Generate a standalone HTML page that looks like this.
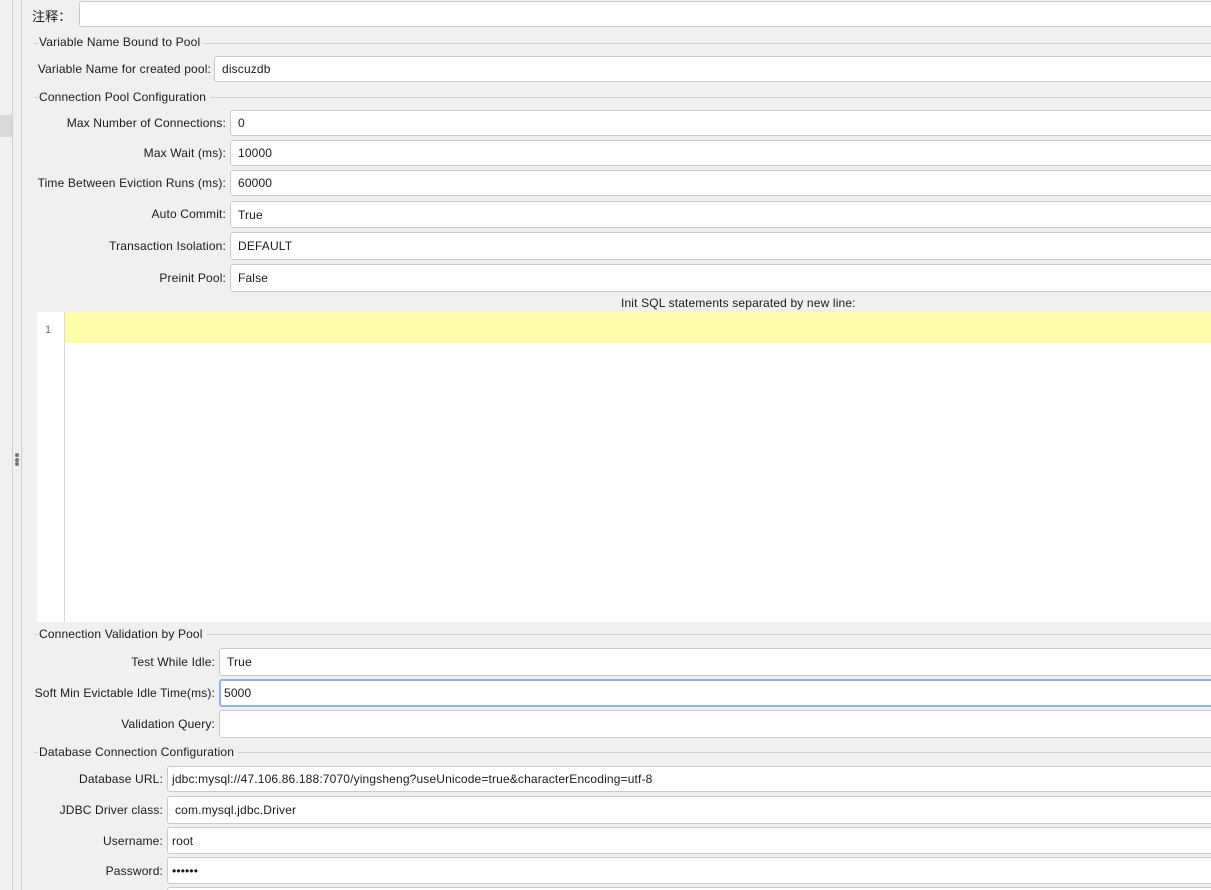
<!DOCTYPE html>
<html style="width:1211px;height:890px;overflow:hidden"><head><meta charset="utf-8"><style>
*{margin:0;padding:0;box-sizing:border-box}
html,body{width:1211px;height:890px;overflow:hidden}
body{background:#f0f0f0;position:relative;font-family:"Liberation Sans","Noto Sans CJK SC",sans-serif;font-size:12px;color:#1a1a1a;letter-spacing:0.15px}
.a{position:absolute;white-space:nowrap}
.in{position:absolute;background:#fff;border:1px solid #c9c9c9;border-radius:3px;right:-4px;padding-left:7px;display:flex;align-items:center}
.lb{position:absolute;text-align:right;white-space:nowrap}
.g{position:absolute;height:1px;background:#cfcfcf;right:0}
</style></head><body>
<div class="a" style="left:12px;top:0;width:1px;height:890px;background:#cfcfcf"></div>
<div class="a" style="left:21px;top:0;width:1px;height:890px;background:#cfcfcf"></div>
<div class="a" style="left:0;top:115px;width:12px;height:22px;background:#d9d9d9"></div>
<div class="a" style="left:15px;top:453px;width:4px;height:4px;border-radius:2px;background:#777"></div>
<div class="a" style="left:15px;top:458px;width:4px;height:4px;border-radius:2px;background:#777"></div>
<div class="a" style="left:15px;top:462px;width:4px;height:4px;border-radius:2px;background:#777"></div>

<div class="a" style="left:32px;top:6px;font-size:13px">注释：</div>
<div class="in" style="left:79px;top:1px;height:26px"></div>

<div class="g" style="left:34px;top:43px"></div>
<div class="a" style="left:38px;top:35px;background:#f0f0f0;padding:0 4px 0 1px">Variable Name Bound to Pool</div>
<div class="lb" style="right:1000px;top:62px">Variable Name for created pool:</div>
<div class="in" style="left:214px;top:56px;height:26px">discuzdb</div>

<div class="g" style="left:34px;top:97px"></div>
<div class="a" style="left:38px;top:90px;background:#f0f0f0;padding:0 4px 0 1px">Connection Pool Configuration</div>
<div class="lb" style="right:985px;top:116px">Max Number of Connections:</div>
<div class="in" style="left:230px;top:110px;height:26px">0</div>
<div class="lb" style="right:985px;top:146px">Max Wait (ms):</div>
<div class="in" style="left:230px;top:140px;height:26px">10000</div>
<div class="lb" style="right:985px;top:176px">Time Between Eviction Runs (ms):</div>
<div class="in" style="left:230px;top:170px;height:26px">60000</div>
<div class="lb" style="right:985px;top:207px">Auto Commit:</div>
<div class="in" style="left:230px;top:201px;height:27px">True</div>
<div class="lb" style="right:985px;top:239px">Transaction Isolation:</div>
<div class="in" style="left:230px;top:232px;height:28px">DEFAULT</div>
<div class="lb" style="right:985px;top:271px">Preinit Pool:</div>
<div class="in" style="left:230px;top:264px;height:28px">False</div>

<div class="a" style="left:621px;top:296px">Init SQL statements separated by new line:</div>
<div class="a" style="left:37px;top:312px;right:0;height:310px;background:#fff"></div>
<div class="a" style="left:64px;top:312px;width:1px;height:310px;background:#d8d8d8"></div>
<div class="a" style="left:65px;top:312px;right:0;height:31px;background:#fefca9"></div>
<div class="a" style="left:45px;top:324px;color:#8a5a8a;font-size:11px">1</div>

<div class="g" style="left:34px;top:634px"></div>
<div class="a" style="left:38px;top:627px;background:#f0f0f0;padding:0 4px 0 1px">Connection Validation by Pool</div>
<div class="lb" style="right:996px;top:655px">Test While Idle:</div>
<div class="in" style="left:219px;top:648px;height:28px">True</div>
<div class="lb" style="right:996px;top:686px">Soft Min Evictable Idle Time(ms):</div>
<div class="in" style="left:219px;top:679px;height:28px;border:2px solid #8fb4e0;padding-left:3px">5000</div>
<div class="lb" style="right:996px;top:717px">Validation Query:</div>
<div class="in" style="left:219px;top:710px;height:28px"></div>

<div class="g" style="left:34px;top:752px"></div>
<div class="a" style="left:38px;top:745px;background:#f0f0f0;padding:0 4px 0 1px">Database Connection Configuration</div>
<div class="lb" style="right:1048px;top:772px">Database URL:</div>
<div class="in" style="left:167px;top:766px;height:26px;padding-left:4px">jdbc:mysql://47.106.86.188:7070/yingsheng?useUnicode=true&amp;characterEncoding=utf-8</div>
<div class="lb" style="right:1048px;top:803px">JDBC Driver class:</div>
<div class="in" style="left:167px;top:796px;height:28px">com.mysql.jdbc.Driver</div>
<div class="lb" style="right:1048px;top:834px">Username:</div>
<div class="in" style="left:167px;top:827px;height:27px;padding-left:4px">root</div>
<div class="lb" style="right:1048px;top:864px">Password:</div>
<div class="in" style="left:167px;top:857px;height:27px;padding-left:4px">••••••</div>
<div class="in" style="left:167px;top:887px;height:3px;border-bottom:none;border-radius:3px 3px 0 0"></div>
</body></html>
